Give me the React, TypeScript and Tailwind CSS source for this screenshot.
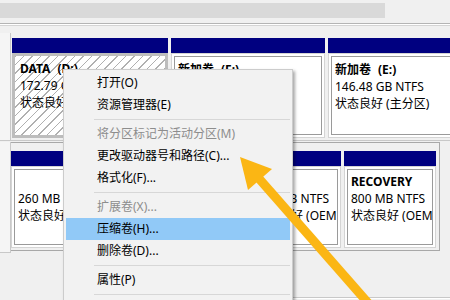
import React from "react";

const Blue = () => <div className="h-[15px] bg-[#000080] shrink-0" />;

function Part({
  w,
  h,
  lines,
  pt,
}: {
  w: string;
  h: string;
  lines: React.ReactNode[];
  pt: string;
}) {
  return (
    <div className={`flex flex-col shrink-0 ${w}`}>
      <Blue />
      <div className={`${h} border border-[#d4d4d4] p-[2px] bg-white`}>
        <div className={`h-full border border-[#9a9a9a] bg-white pl-[3px] ${pt} overflow-hidden whitespace-nowrap`}>
          {lines.map((l, i) => (
            <div key={i} className="h-[17px] leading-[17px]">
              {l}
            </div>
          ))}
        </div>
      </div>
    </div>
  );
}

const Item = ({
  children,
  dis,
  hl,
}: {
  children: React.ReactNode;
  dis?: boolean;
  hl?: boolean;
}) => (
  <div
    className={`h-[22px] flex items-center pl-[31px] whitespace-nowrap ${
      dis ? "text-[#8d8d8d]" : "text-black"
    } ${hl ? "bg-[#91c9f7]" : ""}`}
  >
    {children}
  </div>
);

const Sep = () => (
  <div className="h-[7px] flex items-center pl-[28px]">
    <div className="h-px w-full bg-[#d7d7d7]" />
  </div>
);

export default function App() {
  return (
    <div className="relative w-[450px] h-[300px] overflow-hidden bg-[#f0f0f0] font-['Noto_Sans','Noto_Sans_CJK_SC',sans-serif] text-[12px] text-black">
      {/* top toolbar strip */}
      <div className="h-[3px]" />
      <div className="h-[15px] w-[385px] bg-[#d9d9d9]" />
      <div className="h-[5px]" />
      <div className="h-px bg-[#b4b4b4]" />
      <div className="h-px bg-white" />
      <div className="h-px bg-[#d4d4d4]" />
      <div className="h-[7px]" />

      {/* disk row 1 : y 33 */}
      <div className="flex h-[108px] border-b border-[#c8c8c8]">
        <div className="w-[11px] shrink-0 border-r border-[#c8c8c8] bg-[#f5f5f5]" />
        <div className="flex gap-[3px] pl-px pt-[5px]">
          {/* DATA selected (hatched) */}
          <div className="flex flex-col w-[156px] shrink-0">
            <Blue />
            <div className="h-[85px] border-[3px] border-[#bdbdbd] bg-[repeating-linear-gradient(135deg,#b0b0b0_0px,#b0b0b0_1px,#ffffff_1px,#ffffff_6px)] pl-[5px] pt-[4px] overflow-hidden whitespace-nowrap">
              <div className="h-[17px] leading-[17px] font-bold">
                DATA<span className="ml-[7px]">(D:)</span>
              </div>
              <div className="h-[17px] leading-[17px]">172.79 GB NTFS</div>
              <div className="h-[17px] leading-[17px]">状态良好 (主分区)</div>
            </div>
          </div>
          <Part
            w="w-[154px]"
            h="h-[85px]"
            pt="pt-[4px]"
            lines={[
              <span className="font-bold">
                新加卷<span className="ml-[7px]">(F:)</span>
              </span>,
              "300.00 GB NTFS",
              "状态良好 (主分区)",
            ]}
          />
          <Part
            w="w-[150px]"
            h="h-[85px]"
            pt="pt-[4px]"
            lines={[
              <span className="font-bold">
                新加卷<span className="ml-[7px]">(E:)</span>
              </span>,
              "146.48 GB NTFS",
              "状态良好 (主分区)",
            ]}
          />
        </div>
      </div>

      {/* disk row 2 : y 142 */}
      <div className="flex mt-px">
        <div className="w-[11px] h-[111px] shrink-0 border-r border-b border-[#c8c8c8] bg-[#f5f5f5]" />
        <div className="flex gap-[3px] pt-[8px] pb-[2px] pr-[3px] border border-l-0 border-[#a8a8a8] h-[109px]">
          <Part
            w="w-[234px]"
            h="h-[82px]"
            pt="pt-[3px]"
            lines={["\u00a0", "260 MB", "状态良好 (EFI 系统分区)"]}
          />
          <Part
            w="w-[93px]"
            h="h-[82px]"
            pt="pt-[3px]"
            lines={["\u00a0", "450 MB NTFS", "状态良好 (OEM 分区)"]}
          />
          <Part
            w="w-[92px]"
            h="h-[82px]"
            pt="pt-[3px]"
            lines={[
              <span className="font-bold">RECOVERY</span>,
              "800 MB NTFS",
              "状态良好 (OEM 分区)",
            ]}
          />
        </div>
      </div>

      <div className="mt-[44px] ml-[100px] h-px bg-[#c8c8c8]" />
      <div className="ml-[100px] h-px bg-white" />

      {/* context menu */}
      <div className="absolute left-[63px] top-[69px] w-[230px] h-[250px] bg-[#f2f2f2] border border-[#cccccc] p-[2px] shadow-[2px_2px_3px_rgba(0,0,0,0.35)]">
        <Item>打开(O)</Item>
        <Item>资源管理器(E)</Item>
        <Sep />
        <Item dis>将分区标记为活动分区(M)</Item>
        <Item>更改驱动器号和路径(C)...</Item>
        <Item>格式化(F)...</Item>
        <Sep />
        <Item dis>扩展卷(X)...</Item>
        <Item hl>压缩卷(H)...</Item>
        <Item>删除卷(D)...</Item>
        <Sep />
        <Item>属性(P)</Item>
        <Sep />
        <Item>帮助(H)</Item>
      </div>

      {/* arrow annotation */}
      <svg
        className="absolute left-0 top-0 pointer-events-none"
        width="450"
        height="300"
        viewBox="0 0 450 300"
      >
        <line
          x1="255"
          y1="174"
          x2="383"
          y2="320"
          stroke="#fbb614"
          strokeWidth="9"
        />
        <polygon points="240,157 272,169 248,190" fill="#fbb614" />
      </svg>
    </div>
  );
}
